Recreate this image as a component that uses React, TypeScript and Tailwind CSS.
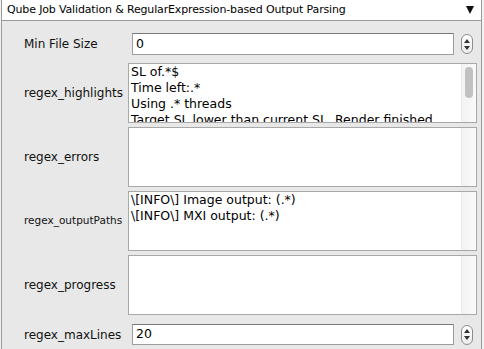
import type { ReactNode } from 'react'

const FONT = { fontFamily: '"Lucida Grande", "DejaVu Sans", sans-serif' }

function Spinner() {
  return (
    <div className="ml-[7px] flex h-[20px] w-[12px] flex-col items-center justify-center gap-[3px] rounded-full border border-[#8e8e8e] bg-gradient-to-b from-white to-[#ececec]">
      <svg width="6" height="4" viewBox="0 0 6 4">
        <path d="M3 0 L6 4 L0 4 Z" fill="#333" />
      </svg>
      <svg width="6" height="4" viewBox="0 0 6 4">
        <path d="M0 0 L6 0 L3 4 Z" fill="#333" />
      </svg>
    </div>
  )
}

function Label({ children, small }: { children: ReactNode; small?: boolean }) {
  return (
    <div
      className={`flex w-[126px] shrink-0 items-center pl-[22px] text-[#111] ${small ? 'text-[10.5px]' : 'text-[12px]'}`}
    >
      {children}
    </div>
  )
}

function NumberRow({ label, value, className = '' }: { label: string; value: string; className?: string }) {
  return (
    <div className={`flex h-[22px] ${className}`}>
      <Label>{label}</Label>
      <div className="ml-[4px] flex h-full w-[322px] items-center border border-[#9c9c9c] border-t-[#7a7a7a] bg-white pl-[3px] text-[12.5px] text-black">
        {value}
      </div>
      <div className="flex items-center">
        <Spinner />
      </div>
    </div>
  )
}

function AreaRow({
  label,
  lines = [],
  thumb,
  small,
  className = '',
}: {
  label: string
  lines?: string[]
  thumb?: boolean
  small?: boolean
  className?: string
}) {
  return (
    <div className={`flex h-[60px] ${className}`}>
      <Label small={small}>{label}</Label>
      <div className="flex h-full w-[349px] border border-[#a8a8a8] bg-white">
        <div className="flex-1 overflow-hidden pl-[2px] text-[12.5px] leading-[16px] text-black whitespace-nowrap">
          {lines.map((l) => (
            <div key={l}>{l}</div>
          ))}
        </div>
        <div className="w-[15px] shrink-0 border-l border-[#ededed] bg-gradient-to-r from-[#f3f3f3] to-[#fafafa] pl-[3px] pt-[3px]">
          {thumb && <div className="h-[31px] w-[8px] rounded-full bg-[#c1c1c1]" />}
        </div>
      </div>
    </div>
  )
}

export default function App() {
  return (
    <div className="h-[349px] w-[484px] overflow-hidden bg-[#f2f2f2]" style={FONT}>
      <div className="ml-[1px] h-full w-[481px] border-x border-[#9a9a9a] bg-[#e8e8e8]">
        <div className="flex h-[21px] items-center justify-between border-b border-[#9a9a9a] bg-white pl-[5px] pr-[7px] text-[11px] tracking-[-0.15px] text-black">
          <span>Qube Job Validation &amp; RegularExpression-based Output Parsing</span>
          <svg width="8" height="8" viewBox="0 0 8 8">
            <path d="M0 0 L8 0 L4 8 Z" fill="#111" />
          </svg>
        </div>
        <div className="flex flex-col pt-[12px]">
          <NumberRow label="Min File Size" value="0" />
          <AreaRow
            className="mt-[8px]"
            label="regex_highlights"
            thumb
            lines={[
              'SL of.*$',
              'Time left:.*',
              'Using .* threads',
              'Target SL lower than current SL. Render finished',
            ]}
          />
          <AreaRow className="mt-[4px]" label="regex_errors" />
          <AreaRow
            className="mt-[4px]"
            label="regex_outputPaths"
            small
            lines={['\\[INFO\\] Image output: (.*)', '\\[INFO\\] MXI output: (.*)']}
          />
          <AreaRow className="mt-[4px]" label="regex_progress" />
          <NumberRow className="mt-[9px] !h-[21px]" label="regex_maxLines" value="20" />
        </div>
      </div>
    </div>
  )
}
